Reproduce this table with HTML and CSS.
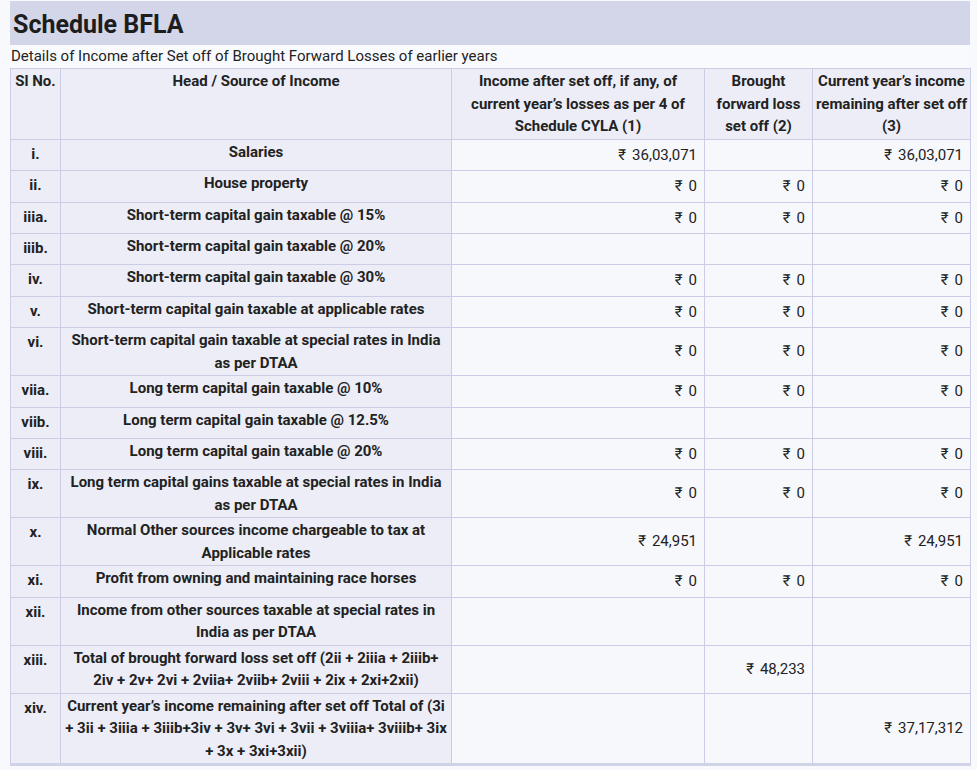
FILE: index.html
```html
<!DOCTYPE html>
<html lang="en">
<head>
<meta charset="utf-8">
<title>Schedule BFLA</title>
<link rel="stylesheet" href="styles.css">
</head>
<body>
<div class="panel">
  <h1 class="title">Schedule BFLA</h1>
  <div class="subtitle">Details of Income after Set off of Brought Forward Losses of earlier years</div>
  <table class="grid">
    <colgroup>
      <col class="c-sl"><col class="c-head"><col class="c-inc"><col class="c-bf"><col class="c-cur">
    </colgroup>
    <thead>
      <tr>
        <th>Sl No.</th>
        <th>Head / Source of Income</th>
        <th>Income after set off, if any, of current year’s losses as per 4 of Schedule CYLA (1)</th>
        <th>Brought forward loss set off (2)</th>
        <th>Current year’s income remaining after set off (3)</th>
      </tr>
    </thead>
    <tbody>
      <tr><td class="sl">i.</td><td class="lbl">Salaries</td><td class="val"><span class="rs">₹</span>36,03,071</td><td class="val"></td><td class="val"><span class="rs">₹</span>36,03,071</td></tr>
      <tr><td class="sl">ii.</td><td class="lbl">House property</td><td class="val"><span class="rs">₹</span>0</td><td class="val"><span class="rs">₹</span>0</td><td class="val"><span class="rs">₹</span>0</td></tr>
      <tr><td class="sl">iiia.</td><td class="lbl">Short-term capital gain taxable @ 15%</td><td class="val"><span class="rs">₹</span>0</td><td class="val"><span class="rs">₹</span>0</td><td class="val"><span class="rs">₹</span>0</td></tr>
      <tr><td class="sl">iiib.</td><td class="lbl">Short-term capital gain taxable @ 20%</td><td class="val"></td><td class="val"></td><td class="val"></td></tr>
      <tr><td class="sl">iv.</td><td class="lbl">Short-term capital gain taxable @ 30%</td><td class="val"><span class="rs">₹</span>0</td><td class="val"><span class="rs">₹</span>0</td><td class="val"><span class="rs">₹</span>0</td></tr>
      <tr><td class="sl">v.</td><td class="lbl">Short-term capital gain taxable at applicable rates</td><td class="val"><span class="rs">₹</span>0</td><td class="val"><span class="rs">₹</span>0</td><td class="val"><span class="rs">₹</span>0</td></tr>
      <tr><td class="sl">vi.</td><td class="lbl">Short-term capital gain taxable at special rates in India as per DTAA</td><td class="val"><span class="rs">₹</span>0</td><td class="val"><span class="rs">₹</span>0</td><td class="val"><span class="rs">₹</span>0</td></tr>
      <tr><td class="sl">viia.</td><td class="lbl">Long term capital gain taxable @ 10%</td><td class="val"><span class="rs">₹</span>0</td><td class="val"><span class="rs">₹</span>0</td><td class="val"><span class="rs">₹</span>0</td></tr>
      <tr><td class="sl">viib.</td><td class="lbl">Long term capital gain taxable @ 12.5%</td><td class="val"></td><td class="val"></td><td class="val"></td></tr>
      <tr><td class="sl">viii.</td><td class="lbl">Long term capital gain taxable @ 20%</td><td class="val"><span class="rs">₹</span>0</td><td class="val"><span class="rs">₹</span>0</td><td class="val"><span class="rs">₹</span>0</td></tr>
      <tr><td class="sl">ix.</td><td class="lbl">Long term capital gains taxable at special rates in India as per DTAA</td><td class="val"><span class="rs">₹</span>0</td><td class="val"><span class="rs">₹</span>0</td><td class="val"><span class="rs">₹</span>0</td></tr>
      <tr><td class="sl">x.</td><td class="lbl">Normal Other sources income chargeable to tax at Applicable rates</td><td class="val"><span class="rs">₹</span>24,951</td><td class="val"></td><td class="val"><span class="rs">₹</span>24,951</td></tr>
      <tr><td class="sl">xi.</td><td class="lbl">Profit from owning and maintaining race horses</td><td class="val"><span class="rs">₹</span>0</td><td class="val"><span class="rs">₹</span>0</td><td class="val"><span class="rs">₹</span>0</td></tr>
      <tr><td class="sl">xii.</td><td class="lbl">Income from other sources taxable at special rates in India as per DTAA</td><td class="val"></td><td class="val"></td><td class="val"></td></tr>
      <tr><td class="sl">xiii.</td><td class="lbl">Total of brought forward loss set off (2ii + 2iiia + 2iiib+ 2iv + 2v+ 2vi + 2viia+ 2viib+ 2viii + 2ix + 2xi+2xii)</td><td class="val"></td><td class="val"><span class="rs">₹</span>48,233</td><td class="val"></td></tr>
      <tr><td class="sl">xiv.</td><td class="lbl">Current year’s income remaining after set off Total of (3i + 3ii + 3iiia + 3iiib+3iv + 3v+ 3vi + 3vii + 3viiia+ 3viiib+ 3ix + 3x + 3xi+3xii)</td><td class="val"></td><td class="val"></td><td class="val"><span class="rs">₹</span>37,17,312</td></tr>
    </tbody>
  </table>
</div>
</body>
</html>
```

FILE: styles.css
```css
html, body {
  margin: 0;
  padding: 0;
  background: #f8f9fc;
}
body {
  padding: 1px 7px 0 10px;
  font-family: Roboto, "Liberation Sans", Arial, sans-serif;
  color: #212121;
  font-size: 15px;
  line-height: 22.5px;
}
.panel {
  width: 960px;
  background: #f8f9fc;
}
.title {
  margin: 0;
  background: #d3d6e8;
  font-size: 25px;
  font-weight: 700;
  line-height: 41px;
  padding: 3px 3px 0;
  color: #1d1d1d;
}
.subtitle {
  padding: 0 1px;
  height: 23px;
  line-height: 23px;
  background: #f9fafd;
  color: #222;
}
.grid {
  width: 960px;
  border-collapse: collapse;
  table-layout: fixed;
  border-bottom: 3px solid #d0d3e8;
}
.c-sl { width: 50px; }
.c-head { width: 391px; }
.c-inc { width: 253px; }
.c-bf { width: 108px; }
.c-cur { width: 158px; }
.grid tbody tr {
  height: 31px;
}
.grid th, .grid td {
  border: 1px solid #cbcde6;
}
.grid th {
  background: #ecedf6;
  font-weight: 700;
  text-align: center;
  vertical-align: top;
  padding: 1px 2px 1px;
  color: #222;
}
.grid td.sl, .grid td.lbl {
  background: #ecedf6;
  font-weight: 700;
  text-align: center;
  vertical-align: top;
  color: #222;
}
.grid td.sl {
  padding: 3px 4px 1px;
}
.grid td.lbl {
  padding: 1px 1px;
}
.grid td.val {
  background: #f7f8fc;
  text-align: right;
  vertical-align: middle;
  padding: 4px 7px;
  color: #222;
}
.rs {
  margin-right: 6px;
}
```
